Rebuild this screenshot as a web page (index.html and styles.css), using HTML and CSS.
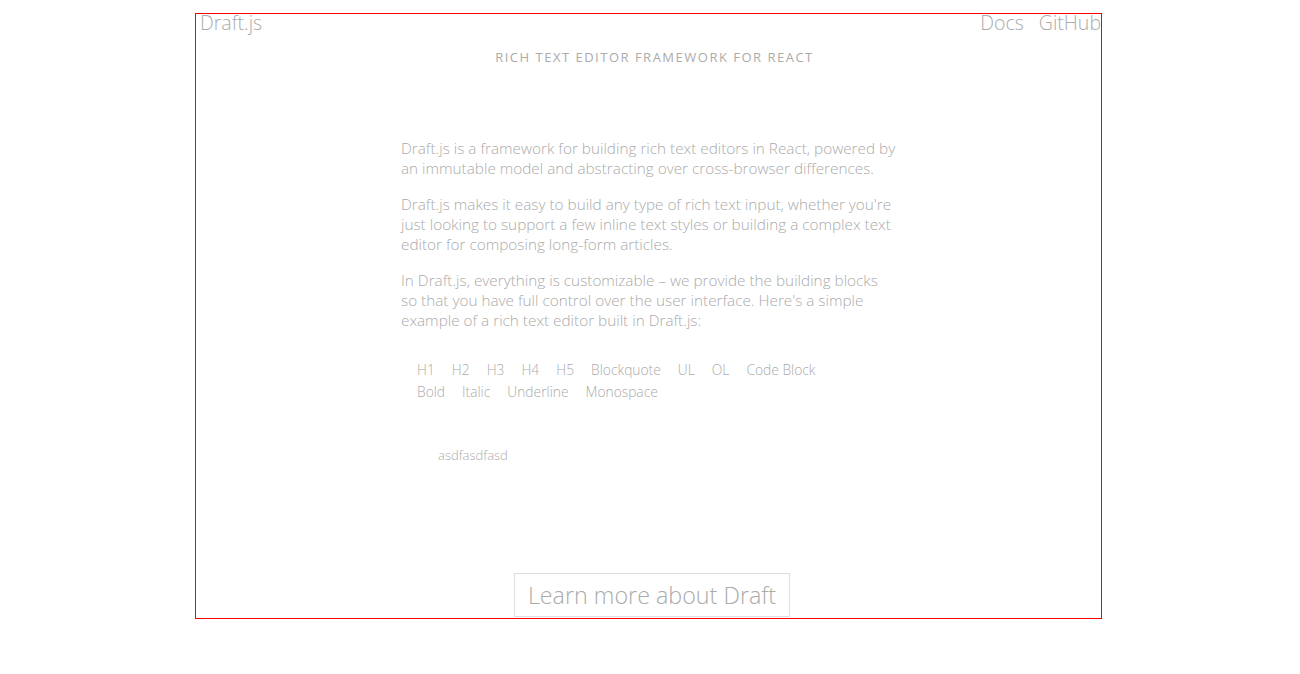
FILE: index.html
```html
<!DOCTYPE html>
<html>
<head>
<meta charset="utf-8">
<link rel="stylesheet" href="styles.css">
</head>
<body>
<div class="page">
  <header class="nav">
    <span class="brand">Draft.js</span>
    <nav class="links"><span>Docs</span><span>GitHub</span></nav>
  </header>
  <h1 class="tagline">Rich Text Editor Framework for React</h1>
  <main class="content">
    <p>Draft.js is a framework for building rich text editors in React, powered by an immutable model and abstracting over cross-browser differences.</p>
    <p>Draft.js makes it easy to build any type of rich text input, whether you're just looking to support a few inline text styles or building a complex text editor for composing long-form articles.</p>
    <p>In Draft.js, everything is customizable – we provide the building blocks so that you have full control over the user interface. Here's a simple example of a rich text editor built in Draft.js:</p>
    <div class="editor">
      <div class="controls">
        <span>H1</span><span>H2</span><span>H3</span><span>H4</span><span>H5</span><span>Blockquote</span><span>UL</span><span>OL</span><span>Code Block</span>
      </div>
      <div class="controls">
        <span>Bold</span><span>Italic</span><span>Underline</span><span>Monospace</span>
      </div>
      <div class="editor-body">asdfasdfasd</div>
    </div>
  </main>
  <div class="cta"><span class="button">Learn more about Draft</span></div>
</div>
</body>
</html>
```
FILE: styles.css
```css
html, body {
  margin: 0;
  background: #fff;
}
body {
  font-family: "Open Sans", "Liberation Sans", sans-serif;
  color: #ababab;
  font-weight: 300;
}
.page {
  box-sizing: border-box;
  width: 907px;
  height: 606px;
  margin: 13px 0 0 195px;
  border: 1px solid #ff0000;
}
.nav {
  display: flex;
  justify-content: space-between;
  padding: 0 0 0 4px;
  font-size: 19.5px;
  line-height: 18px;
}
.links {
  display: flex;
  gap: 15px;
}
.tagline {
  margin: 17px 0 0;
  text-align: center;
  font-size: 13px;
  font-weight: 400;
  text-transform: uppercase;
  letter-spacing: 1.5px;
  line-height: 16px;
  padding-left: 12px;
}
.content {
  width: 495px;
  margin: 73px 0 0 205px;
  font-size: 15.3px;
  line-height: 20px;
}
.content p {
  margin: 0 0 16px;
}
.editor {
  margin-top: 32px;
  padding-left: 16px;
  font-size: 13.8px;
}
.controls {
  display: flex;
  gap: 17px;
  line-height: 16px;
  margin-bottom: 6px;
}
.editor-body {
  margin: 47px 0 0 21px;
  font-size: 13px;
  line-height: 16px;
}
.cta {
  display: flex;
  justify-content: center;
  margin-top: 110px;
  padding-left: 7px;
}
.button {
  border: 1px solid #ddd;
  padding: 8px 13px;
  font-size: 23.3px;
  line-height: 26px;
}
```
